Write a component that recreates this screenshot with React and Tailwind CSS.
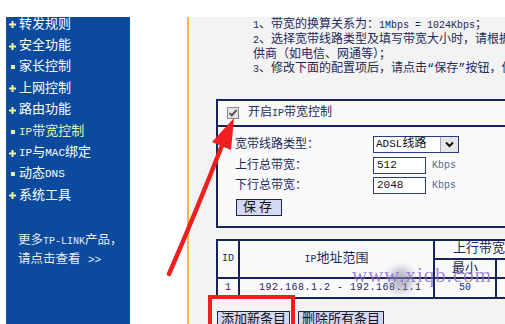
const NAV = [
  { label: "转发规则", mark: "plus" },
  { label: "安全功能", mark: "plus" },
  { label: "家长控制", mark: "dot" },
  { label: "上网控制", mark: "plus" },
  { label: "路由功能", mark: "plus" },
  { label: "IP带宽控制", mark: "dot", active: true },
  { label: "IP与MAC绑定", mark: "plus" },
  { label: "动态DNS", mark: "dot" },
  { label: "系统工具", mark: "plus" },
];

const FONT = "font-['Liberation_Mono','Noto_Sans_CJK_SC',monospace]";

// ASCII runs are drawn narrower, like the half-width Latin of the old router UI
function T({ s, small = "text-[10px]" }) {
  return s.split(/([\x21-\x7e](?:[\x20-\x7e]*[\x21-\x7e])?)/).map((part, i) =>
    i % 2 ? (
      <span key={i} className={small}>
        {part}
      </span>
    ) : (
      part
    )
  );
}

function Mark({ type }) {
  if (type === "dot") {
    return <span className="block w-[4px] h-[4px] bg-[#e6f0a0]" />;
  }
  return (
    <svg width="7" height="7" viewBox="0 0 7 7" className="block">
      <path d="M2.5 0h2v2.5H7v2H4.5V7h-2V4.5H0v-2h2.5z" fill="#eef59a" />
    </svg>
  );
}

function Sidebar() {
  return (
    <aside className="w-[124px] shrink-0 bg-[#0b4a9c] text-white text-[13px] flex flex-col">
      <ul className="mt-[-3px]">
        {NAV.map((item) => (
          <li key={item.label} className="h-[21.4px] flex items-center gap-[3px] pl-[3px] leading-[16px]">
            <span className="w-[7px] flex justify-center">
              <Mark type={item.mark} />
            </span>
            <span className={item.active ? "text-[#e4f2b8]" : "text-white"}>
              <T s={item.label} small="text-[11px]" />
            </span>
          </li>
        ))}
      </ul>
      <div className="mt-[25px] pl-[12px] text-[12.5px] leading-[18px] text-[#e6ecf8] whitespace-nowrap">
        <p>
          <T s="更多TP-LINK产品，" small="text-[10px]" />
        </p>
        <p>
          请点击查看 <span className="text-[11px]">&gt;&gt;</span>
        </p>
      </div>
    </aside>
  );
}

function Checkbox() {
  return (
    <svg width="12" height="12" viewBox="0 0 12 12" className="block">
      <rect x="0.5" y="0.5" width="11" height="11" fill="#e4e4e4" stroke="#8a8a8a" />
      <path d="M2.5 6l2.3 2.4L9.5 3.2" fill="none" stroke="#4a4a4a" strokeWidth="1.8" />
    </svg>
  );
}

function FormBox() {
  return (
    <div className="ml-[27px] mt-[22px] w-[330px] border-2 border-[#15255a] bg-[#fafafa]">
      <div className="h-[26px] flex items-center gap-[9px] pl-[9px] border-b-2 border-[#15255a] text-[#1b2a5a]">
        <Checkbox />
        <span>
          <T s="开启IP带宽控制" />
        </span>
      </div>
      <div className="pl-[17px] pt-[9px] pb-[10px] text-[#1b2a5a]">
        <div className="flex items-center h-[17px]">
          <span className="w-[138px]">宽带线路类型：</span>
          <div className="w-[86px] h-[17px] border border-[#2c3c78] bg-white flex">
            <span className="flex-1 pl-[2px] leading-[15px] text-[#111]">
              <T s="ADSL线路" small="text-[11px]" />
            </span>
            <span className="w-[18px] bg-[#e6e6e6] border-l border-[#9aa0b8] flex items-center justify-center">
              <svg width="9" height="7" viewBox="0 0 9 7">
                <path d="M1 1.5l3.5 3.5L8 1.5" fill="none" stroke="#111" strokeWidth="2" />
              </svg>
            </span>
          </div>
        </div>
        <div className="flex items-center h-[17px] mt-[4px]">
          <span className="w-[138px]">上行总带宽：</span>
          <div className="w-[53px] h-[17px] border border-[#2c3c78] bg-white pl-[3px] leading-[15px] text-[11px] text-[#111]">512</div>
          <span className="ml-[6px] text-[10px] text-[#5a6890]">Kbps</span>
        </div>
        <div className="flex items-center h-[17px] mt-[3px]">
          <span className="w-[138px]">下行总带宽：</span>
          <div className="w-[53px] h-[17px] border border-[#2c3c78] bg-white pl-[3px] leading-[15px] text-[11px] text-[#111]">2048</div>
          <span className="ml-[6px] text-[10px] text-[#5a6890]">Kbps</span>
        </div>
        <button className="block mt-[5px] ml-[1px] w-[46px] h-[17px] border border-[#1b2550] bg-[#d5d8f4] text-[13px] text-[#111] leading-[15px] tracking-[3px]">
          保存
        </button>
      </div>
    </div>
  );
}

function RuleTable() {
  const cell = "border-2 border-[#15255a] text-center text-[#1b2a5a] p-0 leading-[14px]";
  return (
    <table className="ml-[27px] mt-[11px] border-collapse bg-[#fafafa] table-fixed w-[340px]">
      <colgroup>
        <col className="w-[22px]" />
        <col className="w-[195px]" />
        <col className="w-[62px]" />
        <col className="w-[61px]" />
      </colgroup>
      <tbody>
        <tr className="h-[19px]">
          <td rowSpan={2} className={cell + " text-[10px]"}>ID</td>
          <td rowSpan={2} className={cell + " text-[13px]"}>
            <T s="IP地址范围" />
          </td>
          <td colSpan={2} className={cell + " text-left pl-[18px] whitespace-nowrap text-[13px]"}>
            上行带宽(<span className="text-[10px]">Kbps</span>)
          </td>
        </tr>
        <tr className="h-[19px]">
          <td className={cell + " text-[13px]"}>最小</td>
          <td className={cell + " text-[13px]"}>最大</td>
        </tr>
        <tr className="h-[20px]">
          <td className={cell + " text-[10px]"}>1</td>
          <td className={cell + " text-[10px] whitespace-nowrap text-left pl-[19px] tracking-[0.5px]"}>192.168.1.2 - 192.168.1.1</td>
          <td className={cell + " text-[10px]"}>50</td>
          <td className={cell}></td>
        </tr>
      </tbody>
    </table>
  );
}

export default function App() {
  return (
    <div className={`relative w-[505px] h-[324px] overflow-hidden bg-white text-[12px] ${FONT}`}>
      <div className="h-[17px]" />
      <div className="flex h-[307px]">
        <div className="w-[6px] shrink-0" />
        <Sidebar />
        <div className="w-[57px] shrink-0" />
        <div className="w-[2px] shrink-0 bg-[#f2b552]" />
        <main className="flex-1 bg-[#f3f3f3] overflow-hidden">
          <div className="pl-[64px] pt-[1px] leading-[14px] text-[#1b2a5a] whitespace-nowrap">
            <p>
              <T s="1、带宽的换算关系为：1Mbps = 1024Kbps；" />
            </p>
            <p>
              <T s="2、选择宽带线路类型及填写带宽大小时，请根据您申请的宽带服务提" />
            </p>
            <p>供商（如电信、网通等）；</p>
            <p>
              <T s="3、修改下面的配置项后，请点击“保存”按钮，使配置生效。" />
            </p>
          </div>
          <FormBox />
          <RuleTable />
          <div className="ml-[28px] mt-[12px] flex gap-[8px]">
            <button className="w-[73px] h-[17px] border border-[#1b2550] bg-[#d5d8f4] text-[13px] leading-[15px] text-[#111]">添加新条目</button>
            <button className="w-[86px] h-[17px] border border-[#1b2550] bg-[#d5d8f4] text-[13px] leading-[15px] text-[#111]">删除所有条目</button>
          </div>
        </main>
      </div>

      {/* watermark */}
      <div className="absolute left-[390px] top-[268px] w-[22px] h-[24px] rounded-full bg-[#8c8ca8] opacity-60 blur-[4px]" />
      <div className="absolute left-[352px] top-[265px] text-[21px] leading-none tracking-[1px] text-[#8a6ccc] opacity-80 font-['Liberation_Serif',serif]">
        www.xiqb.com
      </div>

      {/* red highlight + arrow */}
      <div className="absolute left-[208px] top-[295px] w-[87px] h-[40px] border-4 border-[#f01f1f]" />
      <svg className="absolute left-0 top-0" width="505" height="324" viewBox="0 0 505 324">
        <path d="M169 274 Q196 212 223 143" fill="none" stroke="#f01f1f" strokeWidth="4.5" strokeLinecap="round" />
        <polygon points="234,118 231,150 212,142" fill="#f01f1f" />
      </svg>
    </div>
  );
}
